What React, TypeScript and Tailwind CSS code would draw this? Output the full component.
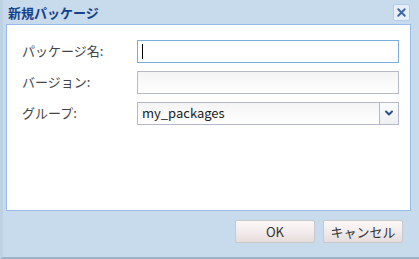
import { ChevronDown, X } from "lucide-react";

const font = { fontFamily: "Tahoma, 'Noto Sans CJK JP', 'DejaVu Sans', sans-serif" };

function Field({ label, children }: { label: string; children: React.ReactNode }) {
	return (
		<div className="flex h-[22px] items-center">
			<label className="w-[116px] pl-[1px] text-[13px] text-[#444]">{label}</label>
			{children}
		</div>
	);
}

export default function App() {
	return (
		<div
			className="flex h-[259px] w-[419px] flex-col border-b-2 border-l-[3px] border-b-[#9fb3c6] border-l-[#bfd2e4] bg-[#c8dbed]"
			style={font}
		>
			<div className="flex h-[24px] items-center justify-between pl-[5px] pr-[9px]">
				<span className="pt-[1px] text-[13px] font-bold text-[#15428b]">新規パッケージ</span>
				<button className="flex h-[17px] w-[17px] items-center justify-center rounded-[2px] border border-[#b7cde3] bg-[#e6eff8]">
					<X size={13} strokeWidth={3.5} className="text-[#3f67a8]" />
				</button>
			</div>
			<div className="ml-[3px] mr-[8px] flex h-[187px] flex-col gap-[9px] border border-[#99bbe8] bg-white pl-[14px] pr-[11px] pt-[15px]">
				<Field label="パッケージ名:">
					<div className="flex h-[23px] flex-1 items-center border border-[#7eadd9] bg-white pl-[4px]">
						<span className="h-[15px] w-px bg-black" />
					</div>
				</Field>
				<Field label="バージョン:">
					<div className="h-[23px] flex-1 border border-[#b5b8c8] bg-gradient-to-b from-[#f4f4f4] to-white" />
				</Field>
				<Field label="グループ:">
					<div className="flex h-[23px] flex-1 border border-[#b5b8c8]">
						<div className="flex flex-1 items-center bg-gradient-to-b from-[#f4f4f4] to-white pl-[4px] text-[13px] text-[#222]">
							my_packages
						</div>
						<div className="flex w-[19px] items-center justify-center border-l border-[#b5b8c8] bg-gradient-to-b from-[#fafbfc] to-[#eef0f3]">
							<ChevronDown size={12} strokeWidth={4} className="text-[#2a4f86]" />
						</div>
					</div>
				</Field>
			</div>
			<div className="flex justify-end gap-[8px] pr-[16px] pt-[9px]">
				<button className="h-[23px] w-[80px] rounded-[2px] border border-[#c9c9c9] bg-gradient-to-b from-[#fdf8f8] via-[#f3ecec] to-[#e6dcdc] text-[13px] text-[#333]">
					OK
				</button>
				<button className="h-[23px] w-[80px] rounded-[2px] border border-[#c9c9c9] bg-gradient-to-b from-[#fdf8f8] via-[#f3ecec] to-[#e6dcdc] text-[13px] text-[#333]">
					キャンセル
				</button>
			</div>
		</div>
	);
}
